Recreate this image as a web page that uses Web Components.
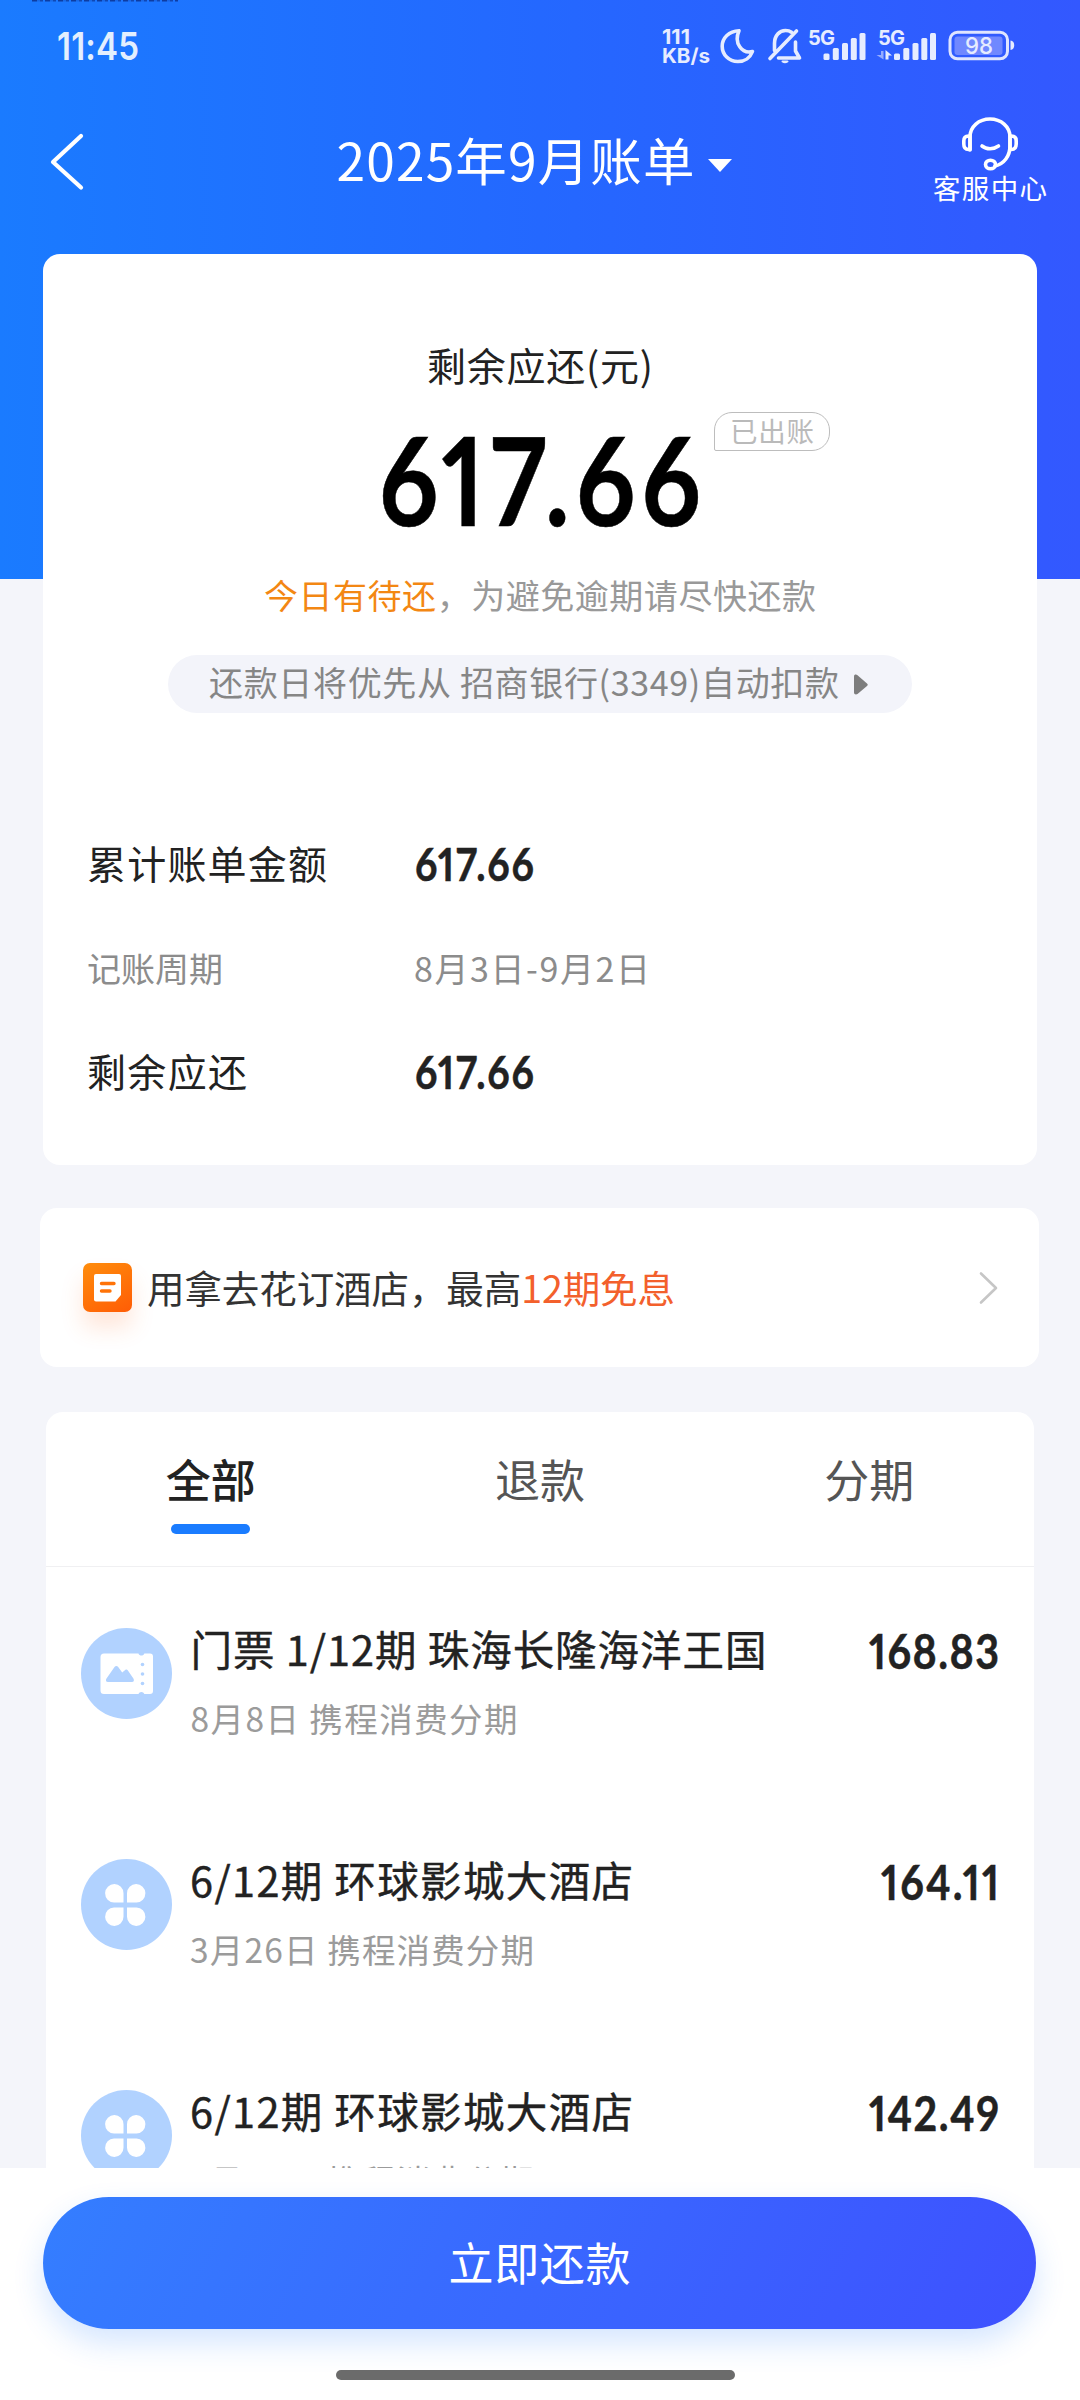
<!DOCTYPE html>
<html lang="zh-CN">
<head>
<meta charset="utf-8">
<title>2025年9月账单</title>
<style>
html,body{margin:0;padding:0;background:#f4f5fa}
body{width:1080px;height:2400px;overflow:hidden;font-family:"Noto Sans CJK SC","Noto Sans",sans-serif;color:#222}
</style>
</head>
<body>
<bill-page></bill-page>
<script>
const define = (name, html, ready) => {
  const tpl = document.createElement('template');
  tpl.innerHTML = html;
  customElements.define(name, class extends HTMLElement {
    connectedCallback() {
      if (this.shadowRoot) return;
      this.attachShadow({mode: 'open'}).appendChild(tpl.content.cloneNode(true));
      if (ready) ready(this, this.shadowRoot);
    }
  });
};

/* Single line of text whose tracking is set so that it spans the given width.
   The optional squeeze attribute condenses the glyphs horizontally. */
define('fit-text', `
<style>
:host{display:block;flex:none;line-height:1;white-space:nowrap}
span{display:inline-block;line-height:1;vertical-align:top;transform-origin:0 0}
</style><span><slot></slot></span>`, (el, root) => {
  const w = +el.getAttribute('width');
  if (!w) return;
  const k = +(el.getAttribute('squeeze') || 1);
  const s = root.querySelector('span');
  const text = root.querySelector('slot').assignedNodes({flatten: true}).map(n => n.textContent).join('');
  const n = [...text.trim()].length;
  const ls = (w / k - s.getBoundingClientRect().width) / (n - 1);
  s.style.letterSpacing = ls + 'px';
  s.style.marginRight = (w - w / k - ls) + 'px';
  if (k !== 1) s.style.transform = `scaleX(${k})`;
});

define('status-bar', `
<style>
:host{display:flex;height:94px;box-sizing:border-box;padding:0 65px 0 57px;justify-content:space-between;align-items:flex-start;color:#e3effe;background:repeating-linear-gradient(90deg,rgba(8,40,130,.75) 0 5px,rgba(8,40,130,.2) 5px 8px,rgba(8,40,130,.6) 8px 11px,transparent 11px 13px) 32px 0/146px 1.500px no-repeat}
.time{padding-top:27px}
.time fit-text{font:600 38px Inter,sans-serif;line-height:1}
svg{display:block;width:356px;height:94px;overflow:visible}
text{font-family:Inter,sans-serif;fill:#e6ecff}
</style>
<div class="time"><fit-text width="82" squeeze=".87">11:45</fit-text></div>
<svg viewBox="660 0 356 94" fill="#e6ecff">
 <text x="663" y="44" font-size="20.500" font-weight="700" textLength="28" lengthAdjust="spacingAndGlyphs">111</text>
 <text x="663" y="62.500" font-size="20" font-weight="700" textLength="48" lengthAdjust="spacingAndGlyphs">KB/s</text>
 <path d="M740 30.700c-10 .3-16.800 7.300-16.800 15.500 0 8.500 6.700 15.300 15.600 15.300 7 0 12.500-4 14.700-10-10.500 2.800-19-8.500-13.500-20.800z" fill="none" stroke="#e6ecff" stroke-width="3.600" stroke-linejoin="round"/>
 <g fill="none" stroke="#e6ecff" stroke-width="3.600" stroke-linecap="round" stroke-linejoin="round">
  <path d="M771 58.500L797.500 31M775.500 50.500v-7c0-8 5-13 11-13 2.500 0 4.500.7 6 1.800M796.500 42v9l4 7h-21"/>
  <path d="M783.500 61.500a3 1.200 0 0 0 5 0z" stroke-width="2"/>
 </g>
 <text x="809" y="44.500" font-size="20" font-weight="700" textLength="27">5G</text>
 <g><rect x="824.500" y="53.500" width="6" height="6.500" rx="1.500"/><rect x="833.800" y="48" width="6" height="12" rx="1.500"/><rect x="843" y="43" width="6" height="17" rx="1.500"/><rect x="851.800" y="38" width="6" height="22" rx="1.500"/><rect x="860.500" y="33" width="6" height="27" rx="1.500"/></g>
 <text x="879" y="44.500" font-size="20" font-weight="700" textLength="27">5G</text>
 <g transform="translate(70.500 0)"><rect x="824.500" y="53.500" width="6" height="6.500" rx="1.500"/><rect x="833.800" y="48" width="6" height="12" rx="1.500"/><rect x="843" y="43" width="6" height="17" rx="1.500"/><rect x="851.800" y="38" width="6" height="22" rx="1.500"/><rect x="860.500" y="33" width="6" height="27" rx="1.500"/></g>
 <path d="M884.500 51v8.500l-7-4.500h4.500v-4z" fill="#96adff"/><path d="M886.500 59.500V50l6.500 5.500h-3.500v4z"/>
 <rect x="951" y="32.300" width="57.500" height="26.500" rx="7.500" fill="none" stroke="#dfe5ff" stroke-width="3"/>
 <rect x="955.500" y="36.500" width="48" height="18.500" rx="3" fill="#7088ff"/>
 <path d="M1011.500 40.500c5 0 5 9.500 0 9.500z"/>
 <text x="966" y="54" font-size="23.500" font-weight="500" textLength="28" lengthAdjust="spacingAndGlyphs">98</text>
</svg>`);

define('nav-bar', `
<style>
:host{display:grid;grid-template-columns:1fr auto 1fr;height:160px;color:#fff;padding:0 33px}
.back{width:40px;height:62px;margin:36px 0 0 15px}
.title{display:flex;gap:13px;padding-top:39px;margin-right:12px}
.title fit-text{font-size:51.500px}
.title svg{width:24px;height:13px;margin-top:26px}
.help{justify-self:end;display:flex;flex-direction:column;align-items:center;padding-top:20px}
.help svg{width:62px;height:60px}
.help fit-text{font-size:27.500px;margin-top:0}
</style>
<svg class="back" viewBox="0 0 40 62" fill="none" stroke="#fff" stroke-width="4.200" stroke-linecap="round" stroke-linejoin="round"><path d="M33 6L5 32l28 25.500"/></svg>
<div class="title"><fit-text width="358"><slot></slot></fit-text><svg viewBox="0 0 24 13"><path d="M0 0h24L12 13z" fill="#fff"/></svg></div>
<div class="help">
 <svg viewBox="960 114 62 60" fill="none" stroke="#fff" stroke-width="3.600" stroke-linecap="round" stroke-linejoin="round">
  <path d="M971 150v-13c0-10.500 9-18 20-18s20 7.500 20 18v9c0 10-6 18-15 20"/>
  <path d="M971 136h-1.500c-3 0-4.700 2-4.700 5v3c0 3.300 1.700 5.500 4.700 5.500h1.500zM1011 136h1.500c3 0 4.700 2 4.700 5v3c0 3.300-1.700 5.500-4.700 5.500h-1.500z"/>
  <path d="M983 146c4.500 3.600 11.500 3.600 16.500 0"/>
  <ellipse cx="991.500" cy="164.500" rx="5" ry="4.300"/>
 </svg>
 <fit-text width="114">客服中心</fit-text>
</div>`);

define('money-text', `
<style>:host{display:block;font-family:Lato,sans-serif;font-weight:700;font-variant-numeric:proportional-nums;line-height:1}</style>
<div></div>`, (el, root) => {
  const f = document.createElement('fit-text');
  f.setAttribute('width', el.getAttribute('width'));
  f.setAttribute('squeeze', '.85');
  f.textContent = el.textContent;
  root.querySelector('div').append(f);
});

define('status-tag', `
<style>:host{display:block;box-sizing:border-box;height:39px;width:116px;border:1.500px solid #bdbdbd;border-radius:18px 18px 18px 2px;color:#bababa;font-size:27.500px;padding:4px 0 0 15px}</style>
<fit-text width="84"><slot></slot></fit-text>`);

define('info-row', `
<style>
:host{display:grid;grid-template-columns:327px 1fr;align-items:center;height:106px;padding-left:44px;font-size:39px;color:#222}
:host([muted]){font-size:34px;color:#8c8c8c}
::slotted(money-text){font-size:46px;margin-top:3px;margin-left:1px;-webkit-text-stroke:.5px #222}
</style><slot name="label"></slot><slot></slot>`);

define('summary-card', `
<style>
:host{display:block;box-sizing:border-box;height:911px;margin:0 43px;background:#fff;border-radius:17px;padding-top:91px}
.c{display:flex;flex-direction:column;align-items:center}
.label{font-size:39px}
.total{position:relative;margin-top:34px;color:#000}
.total money-text{font-size:122px;-webkit-text-stroke:.5px #000}
status-tag{position:absolute;left:335px;top:-6px}
.hint{font-size:34px;color:#999;margin-top:38px}
.hint span{color:#f38713}
.pill{display:flex;align-items:center;justify-content:flex-start;gap:15px;box-sizing:border-box;width:744px;height:58px;margin-top:43px;border-radius:29px;background:#f3f4fa;color:#868686;font-size:34px;padding-left:41px}
.pill fit-text{margin-top:-4px}
.pill svg{width:14px;height:21px}
.rows{margin-top:96px}
.last{height:99px}
</style>
<div class="c">
 <fit-text class="label" width="226">剩余应还(元)</fit-text>
 <div class="total"><money-text width="322">617.66</money-text><status-tag>已出账</status-tag></div>
 <fit-text class="hint" width="552"><span>今日有待还</span>，为避免逾期请尽快还款</fit-text>
 <div class="pill"><fit-text width="630">还款日将优先从 招商银行(3349)自动扣款</fit-text><svg viewBox="0 0 14 21"><path d="M0 2.500C0 .5 2 0 3.500 1.200L13 9.500c1 1 1 1.500 0 2.500L3.500 20C2 21 0 20.500 0 18.500z" fill="#7d7d7d"/></svg></div>
</div>
<div class="rows">
 <info-row><fit-text slot="label" width="240">累计账单金额</fit-text><money-text width="119">617.66</money-text></info-row>
 <info-row muted><fit-text slot="label" width="136">记账周期</fit-text><fit-text width="236">8月3日-9月2日</fit-text></info-row>
 <info-row class="last"><fit-text slot="label" width="160">剩余应还</fit-text><money-text width="119">617.66</money-text></info-row>
</div>`);

define('promo-banner', `
<style>
:host{display:flex;align-items:center;box-sizing:border-box;height:159px;margin:43px 41px 0 40px;padding:0 40px 0 43px;background:#fff;border-radius:17px;font-size:37.500px;color:#333}
.i{width:49px;height:49px;border-radius:7px;background:linear-gradient(150deg,#ff8d0c,#ff5c05);box-shadow:0 16px 22px rgba(255,110,40,.17);margin-right:15px}
fit-text{flex:1;margin-top:-2px}
.go{width:20px;height:34px}
</style>
<svg class="i" viewBox="0 0 49 49"><path d="M13 11h23a2 2 0 0 1 2 2v19l-5.500 6.500H13a2 2 0 0 1-2-2V13a2 2 0 0 1 2-2z" fill="#fff"/><path d="M18.500 20.500H31M18.500 28h8.500" stroke="#ff7308" stroke-width="3.400" stroke-linecap="round"/></svg>
<fit-text width="528"><slot></slot></fit-text>
<svg class="go" viewBox="0 0 20 34" fill="none" stroke="#c6c6c6" stroke-width="2.600" stroke-linecap="round" stroke-linejoin="round"><path d="M2 2.500L17 17 2 31.500"/></svg>`);

define('tab-item', `
<style>
:host{flex:1;display:flex;flex-direction:column;align-items:center;font-size:45px;color:#555;padding-top:44px}
:host([active]){color:#222;font-weight:500}
i{display:none;width:79px;height:10px;border-radius:5px;background:#1a7cff;margin-top:23px}
:host([active]) i{display:block}
</style><fit-text width="90"><slot></slot></fit-text><i></i>`);

define('tab-bar', `
<style>:host{display:flex;height:155px;box-sizing:border-box;border-bottom:1.500px solid #f0f0f2}</style><slot></slot>`);

define('bill-item', `
<style>
:host{display:flex;box-sizing:border-box;height:231px;padding:61px 35px 0 35px}
svg{width:91px;height:91px;flex:none}
.body{flex:1;margin-left:18px}
:host([icon=ticket]) .body{margin-left:18.500px}
.t{font-size:41.500px;font-weight:400;-webkit-text-stroke:.4px #222}
.s{font-size:33.500px;color:#9b9b9b;margin-top:31px}
::slotted(money-text){font-size:48.500px;margin-top:-2px;-webkit-text-stroke:.5px #222}
g{display:none}
:host([icon=ticket]) .ticket,:host([icon=clover]) .clover{display:block}
</style>
<svg viewBox="0 0 91 91"><circle cx="45.500" cy="45.500" r="45.500" fill="#b1d2ff"/>
 <g class="ticket"><path d="M23 25.500h34.500c.8 2.800 5 2.800 5.800 0H69a3 3 0 0 1 3 3v34.500a3 3 0 0 1-3 3h-5.700c-.8-2.800-5-2.800-5.800 0H23a3.500 3.500 0 0 1-3.500-3.500V29a3.500 3.500 0 0 1 3.500-3.500z" fill="#fff"/><path d="M25.500 50.500l8-11.500c1-1.500 2.700-1.500 3.700 0l4 5.500 3-2.500c1-.8 2-.6 2.700.4l5.500 8c1 1.800.5 3.600-1.500 3.600H27c-2 0-2.700-1.800-1.500-3.500z" fill="#b1d2ff"/><circle cx="61.500" cy="36.500" r="1.800" fill="#b1d2ff"/><circle cx="61.500" cy="46" r="1.800" fill="#b1d2ff"/><circle cx="61.500" cy="55.500" r="1.800" fill="#b1d2ff"/></g>
 <g class="clover" fill="#fff"><path d="M42.500 43.500H33a9.200 9.200 0 1 1 9.500-9.200zM46 43.500h9.500a9.200 9.200 0 1 0-9.500-9.200zM42.500 48.500H33a9.200 9.200 0 1 0 9.500 9.200zM46 48.500h9.500a9.200 9.200 0 1 1-9.500 9.200z"/></g>
</svg>
<div class="body"></div><slot></slot>`, (el, root) => {
  const body = root.querySelector('.body');
  for (const [k, cls] of [['title', 't'], ['note', 's']]) {
    const [txt, w] = el.dataset[k].split('|');
    const f = document.createElement('fit-text');
    f.className = cls;
    f.setAttribute('width', w);
    f.textContent = txt;
    body.append(f);
  }
});

define('bill-list', `
<style>:host{display:block;margin:45px 46px 0;background:#fff;border-radius:17px 17px 0 0}</style>
<tab-bar><tab-item active>全部</tab-item><tab-item>退款</tab-item><tab-item>分期</tab-item></tab-bar>
<bill-item icon="ticket" data-title="门票 1/12期 珠海长隆海洋王国|576" data-note="8月8日 携程消费分期|327"><money-text width="130">168.83</money-text></bill-item>
<bill-item icon="clover" data-title="6/12期 环球影城大酒店|443" data-note="3月26日 携程消费分期|344"><money-text width="118">164.11</money-text></bill-item>
<bill-item icon="clover" data-title="6/12期 环球影城大酒店|443" data-note="3月26日 携程消费分期|344"><money-text width="130">142.49</money-text></bill-item>`);

define('pay-bar', `
<style>
:host{display:flex;flex-direction:column;box-sizing:border-box;height:232px;padding:29px 0 0 43px;background:#fff}
button{all:unset;display:flex;justify-content:center;align-items:center;width:993px;height:132px;border-radius:66px;background:linear-gradient(115deg,#347eff,#3e51ff);box-shadow:0 14px 30px rgba(30,120,255,.19);color:#fff;font-size:45px}
button fit-text{margin-top:-4px}
i{width:399px;height:10px;border-radius:5px;background:#6b6b6b;margin:41px 0 0 293px}
</style><button><fit-text width="182"><slot></slot></fit-text></button><i></i>`);

define('bill-page', `
<style>
:host{display:block;width:1080px;height:2400px}
main{height:2168px;overflow:hidden;background:linear-gradient(90deg,#1a7bff,#2468ff 50%,#3358ff) 0 0/100% 579px no-repeat,#f4f5fa}
</style>
<main>
<status-bar></status-bar>
<nav-bar>2025年9月账单</nav-bar>
<summary-card></summary-card>
<promo-banner>用拿去花订酒店，最高<span style="color:#f3602c">12期免息</span></promo-banner>
<bill-list></bill-list>
</main>
<pay-bar>立即还款</pay-bar>`);
</script>
</body>
</html>
